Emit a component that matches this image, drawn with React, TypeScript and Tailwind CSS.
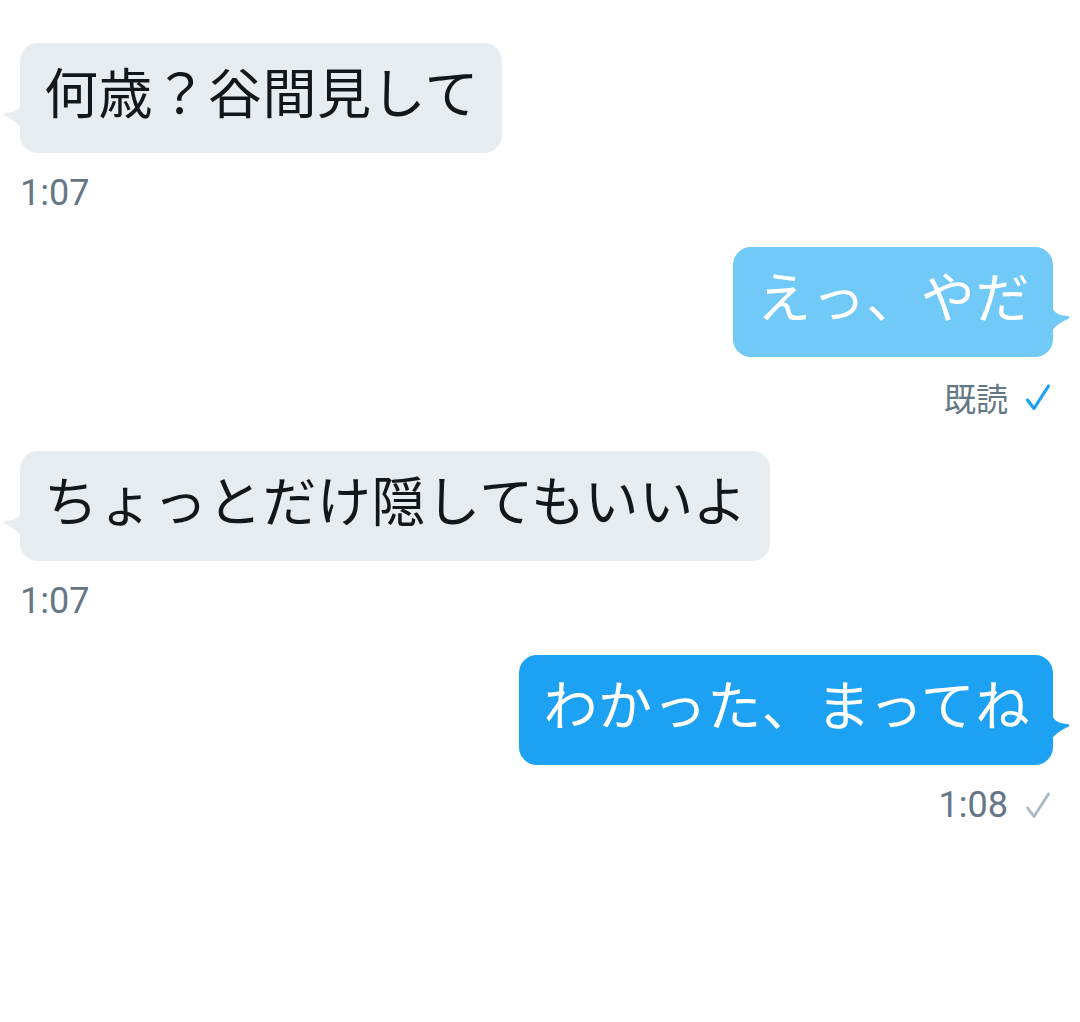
import React from "react";

const JP = { fontFamily: '"Noto Sans CJK JP", "Noto Sans", sans-serif' };
const NUM = { fontFamily: 'Roboto, "Noto Sans CJK JP", sans-serif' };

function LeftTail() {
  return (
    <svg className="absolute left-[-18px] top-[58px]" width="20" height="28" viewBox="0 0 20 28">
      <path d="M20 0 L19 0 Q19 11 4 12 Q0.5 12.5 2 14.5 C8 17 15 21 19 27 L20 27 Z" fill="#E6ECF0" />
    </svg>
  );
}

function RightTail({ color }: { color: string }) {
  return (
    <svg className="absolute right-[-18px] top-[57px]" width="20" height="28" viewBox="0 0 20 28">
      <path d="M0 0 L1 0 Q1 11 16 12 Q19.5 12.5 18 14.5 C12 17 5 21 1 27 L0 27 Z" fill={color} />
    </svg>
  );
}

function Check({ color, w }: { color: string; w: number }) {
  return (
    <svg width="26" height="28" viewBox="0 0 26 28" className="shrink-0">
      <path d="M2.5 17 L9 25.5 L23.5 3" fill="none" stroke={color} strokeWidth={w} strokeLinecap="round" strokeLinejoin="round" />
    </svg>
  );
}

function Incoming({ text, time }: { text: string; time: string }) {
  return (
    <div className="flex flex-col items-start">
      <div className="relative h-[110px] rounded-[18px] bg-[#E6ECF0] pl-[24px] pr-[23px] pt-[21px]">
        <LeftTail />
        <span className="block whitespace-nowrap text-[54px] leading-none tracking-[0.6px] text-[#14171A]" style={JP}>
          {text}
        </span>
      </div>
      <div className="mt-[20px] h-[40px] text-[36px] leading-[40px] text-[#657786]" style={NUM}>
        {time}
      </div>
    </div>
  );
}

function Outgoing({
  text,
  color,
  meta,
}: {
  text: string;
  color: string;
  meta: React.ReactNode;
}) {
  return (
    <div className="flex flex-col items-end">
      <div
        className={
          "relative h-[110px] rounded-[18px] pl-[24px] pr-[23px] pt-[21px] " +
          (color === "light" ? "bg-[#71C9F8]" : "bg-[#1DA1F2]")
        }
      >
        <RightTail color={color === "light" ? "#71C9F8" : "#1DA1F2"} />
        <span className="block whitespace-nowrap text-[54px] leading-none tracking-[0.6px] text-white" style={JP}>
          {text}
        </span>
      </div>
      <div className="mt-[20px] flex h-[40px] items-center gap-[17px] pr-[2px]">{meta}</div>
    </div>
  );
}

export default function App() {
  return (
    <div className="min-h-screen w-[1080px] bg-white pl-[20px] pr-[27px] pt-[43px]">
      <div className="flex flex-col gap-[34px]">
        <Incoming text="何歳？谷間見して" time="1:07" />
        <Outgoing
          text="えっ、やだ"
          color="light"
          meta={
            <>
              <span className="text-[32px] leading-[40px] text-[#657786]" style={JP}>
                既読
              </span>
              <Check color="#1DA1F2" w={3.2} />
            </>
          }
        />
        <Incoming text="ちょっとだけ隠してもいいよ" time="1:07" />
        <Outgoing
          text="わかった、まってね"
          color="dark"
          meta={
            <>
              <span className="text-[36px] leading-[40px] text-[#657786]" style={NUM}>
                1:08
              </span>
              <Check color="#AAB8C2" w={2.8} />
            </>
          }
        />
      </div>
    </div>
  );
}
